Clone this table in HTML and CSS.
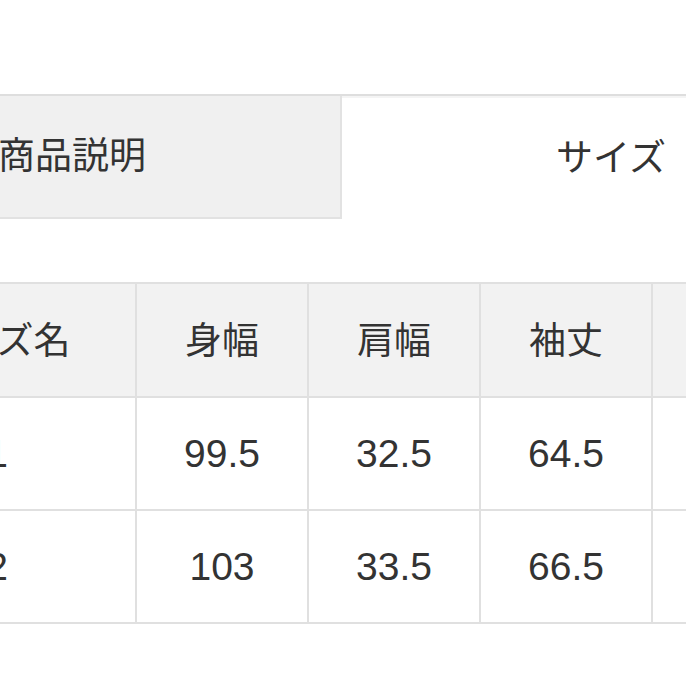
FILE: index.html
```html
<!DOCTYPE html>
<html lang="ja">
<head>
<meta charset="utf-8">
<link rel="stylesheet" href="styles.css">
</head>
<body>
<div class="page">
  <div class="tabs">
    <div class="tab tab-inactive">商品説明</div>
    <div class="tab tab-active">サイズ</div>
  </div>
  <table class="size-table">
    <colgroup>
      <col class="col-name">
      <col class="col-val">
      <col class="col-val">
      <col class="col-val">
      <col class="col-val">
    </colgroup>
    <thead>
      <tr>
        <th>サイズ名</th>
        <th>身幅</th>
        <th>肩幅</th>
        <th>袖丈</th>
        <th>着丈</th>
      </tr>
    </thead>
    <tbody>
      <tr>
        <td>1</td>
        <td>99.5</td>
        <td>32.5</td>
        <td>64.5</td>
        <td>66</td>
      </tr>
      <tr>
        <td>2</td>
        <td>103</td>
        <td>33.5</td>
        <td>66.5</td>
        <td>68</td>
      </tr>
    </tbody>
  </table>
</div>
</body>
</html>
```

FILE: styles.css
```css
html, body {
  margin: 0;
  padding: 0;
  background: #ffffff;
  overflow: hidden;
}

.page {
  width: 686px;
  height: 686px;
  overflow: hidden;
  font-family: "Liberation Sans", "Noto Sans CJK JP", sans-serif;
  color: #333333;
  padding-top: 94px;
  box-sizing: border-box;
}

.tabs {
  display: flex;
  margin-left: -196px;
  width: 1076px;
  border-top: 2px solid #dedede;
}

.tab {
  width: 538px;
  height: 123px;
  box-sizing: border-box;
  display: flex;
  align-items: center;
  justify-content: center;
  font-size: 37px;
  padding-bottom: 8px;
}

.tab-inactive {
  background: #f0f0f0;
  border-right: 2px solid #e2e2e2;
  border-bottom: 2px solid #e2e2e2;
}

.tab-active {
  background: #ffffff;
  border-top: 2px solid #f4f4f4;
}

.size-table {
  margin-top: 63px;
  margin-left: -143px;
  border-collapse: collapse;
  table-layout: fixed;
  width: 966px;
}

.col-name {
  width: 278px;
}

.col-val {
  width: 172px;
}

.size-table th,
.size-table td {
  border: 2px solid #e0e0e0;
  padding: 0;
  text-align: center;
  vertical-align: middle;
  font-weight: normal;
  color: #333333;
}

.size-table th {
  height: 108px;
  padding-bottom: 4px;
  font-size: 37px;
  background: #f2f2f2;
}

.size-table td {
  height: 111px;
  font-size: 39px;
}
```
